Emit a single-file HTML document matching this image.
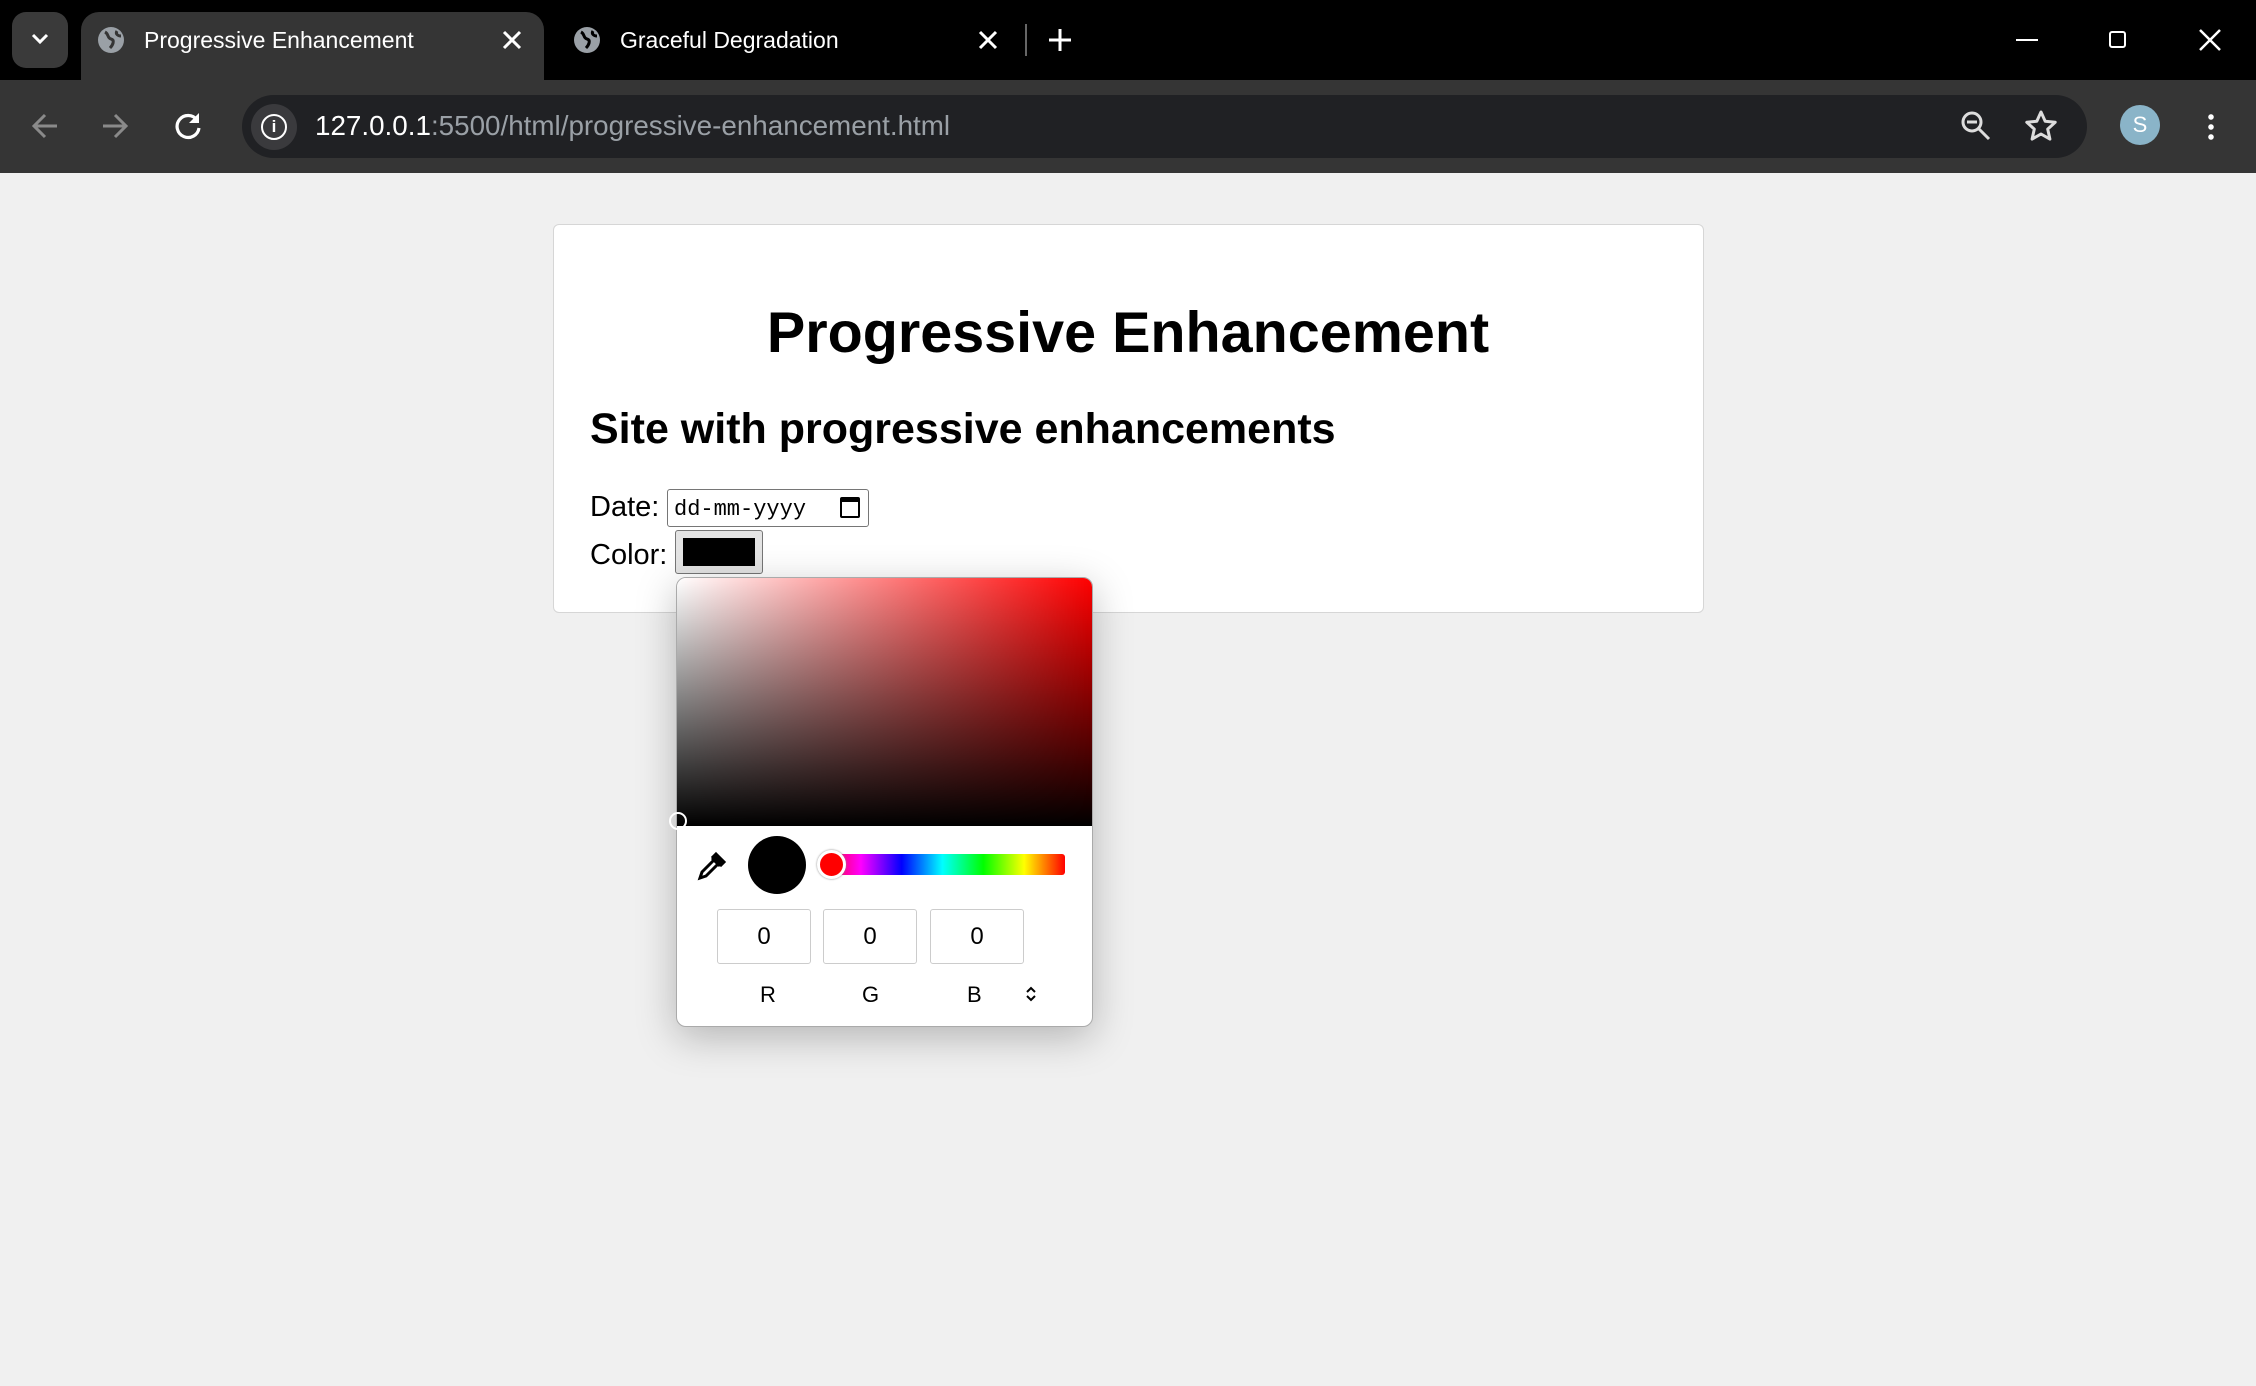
<!DOCTYPE html>
<html><head><meta charset="utf-8"><style>
*{box-sizing:border-box;margin:0;padding:0}
body{width:2256px;height:1386px;background:#f0f0f0;font-family:"Liberation Sans",Arial,sans-serif;position:relative;overflow:hidden}
.abs{position:absolute}
#tabbar{left:0;top:0;width:2256px;height:80px;background:#000}
#toolbar{left:0;top:80px;width:2256px;height:93px;background:#353535}
.tabt{font-size:23px;color:#fff;top:27px}
.card{left:553px;top:224px;width:1151px;height:389px;background:#fff;border:1px solid #d6d6d6;border-radius:6px}
h1{position:absolute;left:0;width:100%;text-align:center;top:300px;font-size:57.5px;font-weight:bold}
.inp{position:absolute;top:909px;width:94px;height:55px;border:1px solid #ccc;border-radius:3px;text-align:center;line-height:53px;font-size:24px}
</style></head><body>
<div id="tabbar" class="abs"></div>
<div class="abs" style="left:12px;top:12px;width:56px;height:56px;background:#3a3a3a;border-radius:14px"></div>
<svg class="abs" style="left:28px;top:30px" width="24" height="18"><path d="M5 5l7 7 7-7" stroke="#fff" stroke-width="3" fill="none"/></svg>
<div class="abs" style="left:81px;top:12px;width:463px;height:80px;background:#353535;border-radius:18px 18px 0 0"></div>
<svg class="abs" style="left:97px;top:26px" width="28" height="28"><circle cx="14" cy="14" r="13" fill="#9aa0a6"/><path d="M8 6c4 2 2 6 6 7s2 6-1 9M20 5c-2 3 1 5 4 5" stroke="#353535" stroke-width="3" fill="none"/></svg>
<div class="abs tabt" style="left:144px">Progressive Enhancement</div>
<svg class="abs" style="left:502px;top:30px" width="20" height="20"><path d="M2 2l16 16M18 2L2 18" stroke="#fff" stroke-width="3"/></svg>
<svg class="abs" style="left:573px;top:26px" width="28" height="28"><circle cx="14" cy="14" r="13" fill="#9aa0a6"/><path d="M8 6c4 2 2 6 6 7s2 6-1 9M20 5c-2 3 1 5 4 5" stroke="#000" stroke-width="3" fill="none"/></svg>
<div class="abs tabt" style="left:620px">Graceful Degradation</div>
<svg class="abs" style="left:978px;top:30px" width="20" height="20"><path d="M2 2l16 16M18 2L2 18" stroke="#fff" stroke-width="3"/></svg>
<div class="abs" style="left:1025px;top:24px;width:2px;height:32px;background:#666"></div>
<svg class="abs" style="left:1048px;top:28px" width="24" height="24"><path d="M12 1v22M1 12h22" stroke="#fff" stroke-width="3"/></svg>
<div class="abs" style="left:2016px;top:39px;width:22px;height:2px;background:#fff"></div>
<div class="abs" style="left:2109px;top:31px;width:17px;height:17px;border:2px solid #fff;border-radius:3px"></div>
<svg class="abs" style="left:2199px;top:29px" width="22" height="22"><path d="M1 1l20 20M21 1L1 21" stroke="#fff" stroke-width="2.5"/></svg>
<div id="toolbar" class="abs"></div>
<svg class="abs" style="left:31px;top:112px" width="28" height="28"><path d="M26 14H4M14 3L3 14l11 11" stroke="#8a8a8a" stroke-width="3" fill="none"/></svg>
<svg class="abs" style="left:101px;top:112px" width="28" height="28"><path d="M2 14h22M14 3l11 11-11 11" stroke="#8a8a8a" stroke-width="3" fill="none"/></svg>
<svg class="abs" style="left:173px;top:111px" width="30" height="30"><path d="M24 9A11 11 0 1 0 26 17" stroke="#fff" stroke-width="3.2" fill="none"/><path d="M26 2v10H16z" fill="#fff"/></svg>
<div class="abs" style="left:242px;top:95px;width:1845px;height:63px;background:#202124;border-radius:32px"></div>
<div class="abs" style="left:251px;top:104px;width:46px;height:46px;background:#3a3a3d;border-radius:50%"></div>
<div class="abs" style="left:261px;top:114px;width:26px;height:26px;border:2.5px solid #fff;border-radius:50%;color:#fff;font-size:17px;font-weight:bold;text-align:center;line-height:21px">i</div>
<div class="abs" style="left:315px;top:110px;font-size:27.8px;color:#fff">127.0.0.1<span style="color:#9aa0a6">:5500/html/progressive-enhancement.html</span></div>
<svg class="abs" style="left:1960px;top:110px" width="32" height="32"><circle cx="12" cy="12" r="9" stroke="#ddd" stroke-width="3" fill="none"/><path d="M7 12h10M19 19l10 10" stroke="#ddd" stroke-width="3"/></svg>
<svg class="abs" style="left:2024px;top:109px" width="34" height="34"><path d="M17 3l4.2 9.3 10 1-7.5 6.8 2.2 10L17 25l-8.9 5.1 2.2-10L2.8 13.3l10-1z" stroke="#ddd" stroke-width="3" fill="none" stroke-linejoin="round"/></svg>
<div class="abs" style="left:2120px;top:105px;width:40px;height:40px;background:#8ab4c8;border-radius:50%;color:#fff;font-size:22px;text-align:center;line-height:40px">S</div>
<div class="abs" style="left:2208px;top:112px;width:6px;height:28px;background:radial-gradient(circle,#fff 2.5px,transparent 3px) 0 0/6px 10px"></div>

<div class="abs card"></div>
<h1>Progressive Enhancement</h1>
<div class="abs" style="left:590px;top:405px;font-size:43px;font-weight:bold">Site with progressive enhancements</div>
<div class="abs" style="left:590px;top:491px;font-size:29px">Date:</div>
<div class="abs" style="left:667px;top:489px;width:202px;height:38px;border:1px solid #767676;border-radius:3px;font-family:'Liberation Mono',monospace;font-size:22px;padding:7px 6px">dd-mm-yyyy</div>
<div class="abs" style="left:840px;top:497px;width:20px;height:21px;border:2.5px solid #000;border-top-width:5px;border-radius:2px"></div>
<div class="abs" style="left:590px;top:539px;font-size:29px">Color:</div>
<div class="abs" style="left:675px;top:530px;width:88px;height:44px;background:#e4e4e4;border:1px solid #767676;border-radius:3px"></div>
<div class="abs" style="left:683px;top:538px;width:72px;height:28px;background:#000"></div>

<div class="abs" style="left:676px;top:577px;width:417px;height:450px;background:#fff;border:1px solid #aaa;border-radius:10px;box-shadow:0 10px 40px rgba(0,0,0,.25);overflow:hidden">
 <div style="position:absolute;left:0;top:0;width:100%;height:248px;background:linear-gradient(to top,#000,transparent),linear-gradient(to right,#fff,#f00)"></div>
</div>
<div class="abs" style="left:669px;top:812px;width:18px;height:18px;border:2.5px solid #fff;border-radius:50%"></div>
<svg class="abs" style="left:696px;top:850px" width="32" height="32"><path d="M4 28l2-6 12-12 4 4-12 12z" stroke="#000" stroke-width="3" fill="none"/><path d="M16 8l8 8M20 4l8 8-3 3-8-8z" stroke="#000" stroke-width="3" fill="#000"/></svg>
<div class="abs" style="left:748px;top:836px;width:58px;height:58px;background:#000;border-radius:50%"></div>
<div class="abs" style="left:820px;top:854px;width:245px;height:21px;border-radius:3px;background:linear-gradient(to right,#f00,#f0f,#00f,#0ff,#0f0,#ff0,#f00)"></div>
<div class="abs" style="left:817px;top:850px;width:29px;height:29px;background:#f00;border:3px solid #fff;border-radius:50%;box-shadow:0 0 2px #888"></div>
<div class="inp" style="left:717px">0</div>
<div class="inp" style="left:823px">0</div>
<div class="inp" style="left:930px">0</div>
<div class="abs" style="left:760px;top:982px;font-size:22px">R</div>
<div class="abs" style="left:862px;top:982px;font-size:22px">G</div>
<div class="abs" style="left:967px;top:982px;font-size:22px">B</div>
<svg class="abs" style="left:1024px;top:985px" width="14" height="18"><path d="M3 7l4-4 4 4M3 11l4 4 4-4" stroke="#000" stroke-width="2" fill="none"/></svg>
</body></html>
